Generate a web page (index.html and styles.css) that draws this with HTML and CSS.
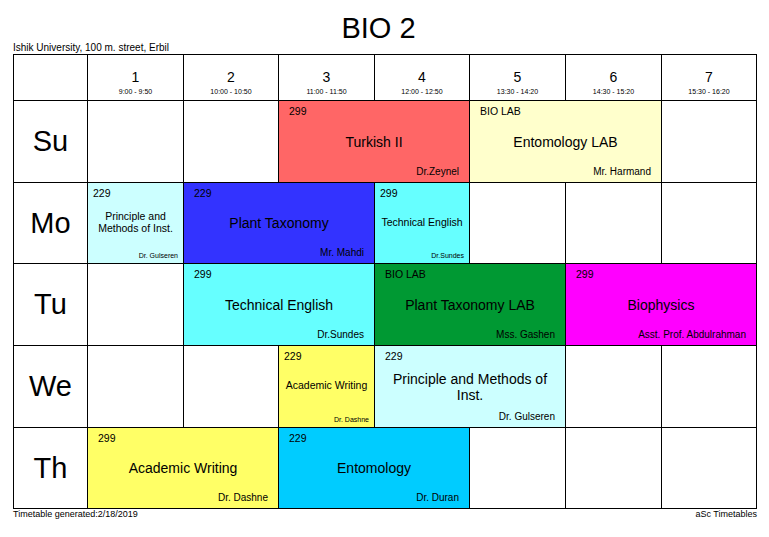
FILE: index.html
```html
<!DOCTYPE html>
<html>
<head>
<meta charset="utf-8">
<title>BIO 2</title>
<link rel="stylesheet" href="styles.css">
</head>
<body>
<div class="page">
  <h1 class="title">BIO 2</h1>
  <div class="subtitle">Ishik University, 100 m. street, Erbil</div>
  <div class="timetable">
    <div class="cell"></div>
    <div class="cell head"><div class="num">1</div><div class="time">9:00 - 9:50</div></div>
    <div class="cell head"><div class="num">2</div><div class="time">10:00 - 10:50</div></div>
    <div class="cell head"><div class="num">3</div><div class="time">11:00 - 11:50</div></div>
    <div class="cell head"><div class="num">4</div><div class="time">12:00 - 12:50</div></div>
    <div class="cell head"><div class="num">5</div><div class="time">13:30 - 14:20</div></div>
    <div class="cell head"><div class="num">6</div><div class="time">14:30 - 15:20</div></div>
    <div class="cell head"><div class="num">7</div><div class="time">15:30 - 16:20</div></div>

    <div class="cell day">Su</div>
    <div class="cell"></div>
    <div class="cell"></div>
    <div class="cell lesson span2 c-red"><div class="room">299</div><div class="subject">Turkish II</div><div class="teacher">Dr.Zeynel</div></div>
    <div class="cell lesson span2 c-cream"><div class="room">BIO LAB</div><div class="subject">Entomology LAB</div><div class="teacher">Mr. Harmand</div></div>
    <div class="cell"></div>

    <div class="cell day">Mo</div>
    <div class="cell lesson small c-pale"><div class="room">229</div><div class="subject">Principle and Methods of Inst.</div><div class="teacher">Dr. Gulseren</div></div>
    <div class="cell lesson span2 c-blue"><div class="room">229</div><div class="subject">Plant Taxonomy</div><div class="teacher">Mr. Mahdi</div></div>
    <div class="cell lesson small c-cyan"><div class="room">299</div><div class="subject">Technical English</div><div class="teacher">Dr.Sundes</div></div>
    <div class="cell"></div>
    <div class="cell"></div>
    <div class="cell"></div>

    <div class="cell day">Tu</div>
    <div class="cell"></div>
    <div class="cell lesson span2 c-cyan"><div class="room">299</div><div class="subject">Technical English</div><div class="teacher">Dr.Sundes</div></div>
    <div class="cell lesson span2 c-green"><div class="room">BIO LAB</div><div class="subject">Plant Taxonomy LAB</div><div class="teacher">Mss. Gashen</div></div>
    <div class="cell lesson span2 c-magenta"><div class="room">299</div><div class="subject">Biophysics</div><div class="teacher">Asst. Prof. Abdulrahman</div></div>

    <div class="cell day">We</div>
    <div class="cell"></div>
    <div class="cell"></div>
    <div class="cell lesson small c-yellow"><div class="room">229</div><div class="subject">Academic Writing</div><div class="teacher">Dr. Dashne</div></div>
    <div class="cell lesson span2 c-pale"><div class="room">229</div><div class="subject">Principle and Methods of Inst.</div><div class="teacher">Dr. Gulseren</div></div>
    <div class="cell"></div>
    <div class="cell"></div>

    <div class="cell day">Th</div>
    <div class="cell lesson span2 c-yellow"><div class="room">299</div><div class="subject">Academic Writing</div><div class="teacher">Dr. Dashne</div></div>
    <div class="cell lesson span2 c-sky"><div class="room">229</div><div class="subject">Entomology</div><div class="teacher">Dr. Duran</div></div>
    <div class="cell"></div>
    <div class="cell"></div>
    <div class="cell"></div>
  </div>
  <div class="footer">
    <span>Timetable generated:2/18/2019</span>
    <span>aSc Timetables</span>
  </div>
</div>
</body>
</html>
```

FILE: styles.css
```css
html, body {
  margin: 0;
  padding: 0;
  background: #ffffff;
}

body {
  font-family: "Liberation Sans", Arial, sans-serif;
  color: #000000;
}

.page {
  width: 744px;
  padding: 14px 13px 0 13px;
}

.title {
  margin: 0;
  padding-right: 13px;
  font-size: 29px;
  line-height: 28px;
  font-weight: normal;
  text-align: center;
}

.subtitle {
  font-size: 10px;
  line-height: 12px;
}

.timetable {
  display: grid;
  grid-template-columns: 73px 95px 94px 95px 94px 95px 95px 94px;
  grid-template-rows: 45px 81px 80px 81px 81px 80px;
  gap: 1px;
  background: #000000;
  border: 1px solid #000000;
}

.cell {
  background: #ffffff;
  min-width: 0;
  min-height: 0;
}

.head {
  text-align: center;
  padding-top: 14px;
  box-sizing: border-box;
}

.num {
  font-size: 14px;
  line-height: 16px;
}

.time {
  font-size: 7px;
  line-height: 9px;
  margin-top: 2px;
}

.day {
  display: flex;
  align-items: center;
  justify-content: center;
  font-size: 29px;
}

.span2 {
  grid-column: span 2;
}

.lesson {
  display: grid;
  grid-template-rows: 1fr auto 1fr;
  padding: 4px 10px 4px 10px;
  box-sizing: border-box;
}

.room {
  align-self: start;
  font-size: 10.5px;
  line-height: 12px;
}

.subject {
  text-align: center;
  font-size: 14px;
  line-height: 16px;
}

.teacher {
  align-self: end;
  text-align: right;
  font-size: 10px;
  line-height: 12px;
  white-space: nowrap;
}

.small {
  padding: 4px 5px 3px 5px;
}

.small .subject {
  font-size: 10.5px;
  line-height: 12px;
  margin: 0 -3px 4px -3px;
}

.small .teacher {
  font-size: 7px;
  line-height: 8px;
}

.c-red { background: #ff6666; }
.c-cream { background: #ffffcc; }
.c-pale { background: #ccffff; }
.c-blue { background: #3333ff; }
.c-cyan { background: #66ffff; }
.c-green { background: #009933; }
.c-magenta { background: #ff00ff; }
.c-yellow { background: #ffff66; }
.c-sky { background: #00ccff; }

.footer {
  display: flex;
  justify-content: space-between;
  font-size: 9px;
  line-height: 11px;
}
```
